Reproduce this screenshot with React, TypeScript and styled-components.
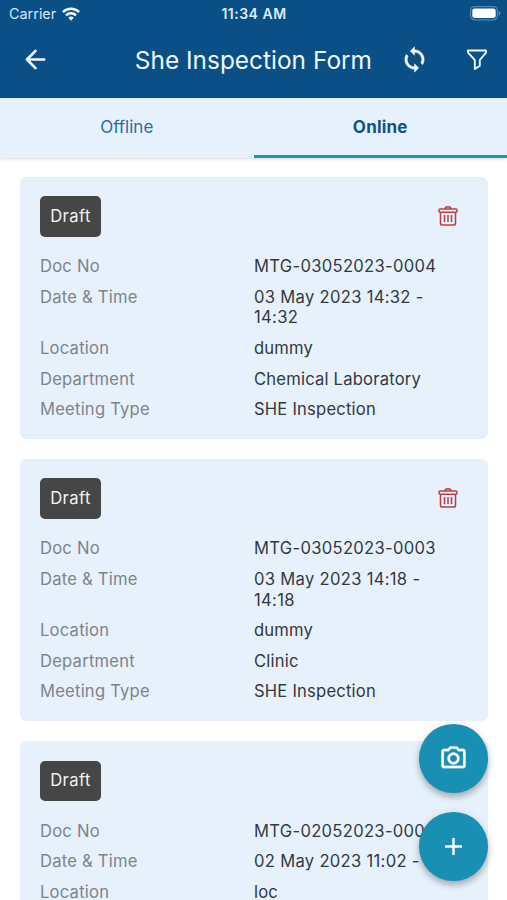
import React from "react";
import styled, { createGlobalStyle } from "styled-components";

const GlobalStyle = createGlobalStyle`
  * { box-sizing: border-box; }
  html, body { margin: 0; height: 100%; overflow: hidden; }
  body { background: #fff; font-family: Inter, "Liberation Sans", sans-serif; }
  button { border: 0; padding: 0; background: none; font: inherit; }
`;

const Screen = styled.main`
  position: relative;
  width: 507px;
  height: 900px;
  overflow: hidden;
  background: #fff;
`;

const Header = styled.header`
  height: 98px;
  background: #0a4f86;
  color: #f0f8ff;
`;

const StatusBar = styled.div`
  display: grid;
  grid-template-columns: 1fr auto 1fr;
  align-items: center;
  height: 27px;
  padding: 0 6px 0 9px;
  font-size: 14.4px;
`;

const Carrier = styled.div`
  display: flex;
  align-items: center;
  gap: 6px;
  color: #d3e6f6;
`;

const Clock = styled.div`
  position: relative;
  left: -1px;
  font-size: 14px;
  font-weight: 600;
  letter-spacing: 0.5px;
  color: #dcebf8;
`;

const BatteryIcon = styled.svg`
  justify-self: end;
`;

const TitleBar = styled.div`
  display: grid;
  grid-template-columns: 70px 1fr 63px 61px;
  align-items: center;
  height: 65px;
`;

const Title = styled.h1`
  margin: 0;
  padding-right: 11px;
  text-align: right;
  font-size: 24.4px;
  font-weight: 400;
  letter-spacing: 0.02px;
  white-space: nowrap;
`;

const IconButton = styled.button`
  display: grid;
  place-items: center;
  height: 40px;
  color: inherit;
`;

const Tabs = styled.nav`
  display: grid;
  grid-template-columns: 1fr 1fr;
  height: 60px;
  background: #e6f1fc;
  box-shadow: 0 1px 3px rgba(60, 30, 30, 0.18);
`;

const Tab = styled.button<{ $active?: boolean }>`
  padding-top: 1px;
  border-bottom: 3px solid ${(p) => (p.$active ? "#2292b5" : "transparent")};
  color: ${(p) => (p.$active ? "#11518a" : "#2d6ba0")};
  font-size: 17px;
  font-weight: ${(p) => (p.$active ? 700 : 400)};
  letter-spacing: ${(p) => (p.$active ? 0.2 : 0)}px;
`;

const List = styled.section`
  display: flex;
  flex-direction: column;
  gap: 20px;
  padding: 19px 19.5px 0 20.4px;
`;

const Card = styled.article`
  height: 262.2px;
  flex: none;
  padding: 19.3px 20px 19.3px 19.6px;
  border-radius: 6px;
  background: #e6f1fc;
`;

const CardTop = styled.div`
  display: flex;
  align-items: center;
  justify-content: space-between;
  padding-right: 10px;
  margin-bottom: 19.5px;
`;

const DeleteButton = styled(IconButton)`
  padding-bottom: 2px;
`;

const Badge = styled.span`
  display: grid;
  place-items: center;
  width: 61px;
  height: 40.5px;
  padding-bottom: 2px;
  border-radius: 5px;
  background: #464646;
  color: #f2f2f2;
  font-size: 16.6px;
  letter-spacing: 0.4px;
`;

const Details = styled.dl`
  display: grid;
  grid-template-columns: 214px 1fr;
  row-gap: 10px;
  margin: 0;
  font-size: 16.6px;
  line-height: 20.6px;
  letter-spacing: 0.22px;
`;

const Label = styled.dt`
  color: #7f8488;
`;

const Value = styled.dd<{ $numeric?: boolean }>`
  margin: 0;
  padding-right: 18px;
  color: #35393e;
  letter-spacing: ${(p) => (p.$numeric ? 0.3 : 0.2)}px;
`;

const Actions = styled.aside`
  position: absolute;
  right: 19.5px;
  bottom: 19.5px;
  display: grid;
  gap: 19.5px;
`;

const Fab = styled.button`
  display: grid;
  place-items: center;
  width: 68.5px;
  height: 68.5px;
  border-radius: 50%;
  background: #188fb3;
  color: #fff;
  box-shadow: 0 4px 6px rgba(0, 0, 0, 0.25), 0 1px 10px rgba(0, 0, 0, 0.08);
`;

const WifiIcon = () => (
  <svg width="18" height="14" viewBox="0 0 18 14" fill="none" stroke="#f5fbff" strokeWidth="2.5">
    <path d="M.9 5.1a11.5 11.5 0 0 1 16.2 0M4 8.4a7.1 7.1 0 0 1 10 0" />
    <path d="M6.3 10.8a3.8 3.8 0 0 1 5.4 0L9 13.7z" fill="#f5fbff" stroke="none" />
  </svg>
);

const Battery = () => (
  <BatteryIcon width="31" height="15" viewBox="0 0 31 15">
    <rect x=".6" y=".6" width="26.8" height="13.3" rx="4" fill="none" stroke="#5685ae" strokeWidth="1.2" />
    <rect x="2.3" y="2.4" width="23.4" height="9.7" rx="2.3" fill="#fff" />
    <path d="M28.8 5v4.6q1.500-.7 1.500-2.300T28.800 5" fill="#7198bb" />
  </BatteryIcon>
);

const BackIcon = () => (
  <svg width="29" height="29" viewBox="0 0 24 24" fill="none" stroke="currentColor" strokeWidth="2.200" strokeLinecap="round" strokeLinejoin="round">
    <path d="M19.200 12H5M12 4.900L4.900 12l7.100 7.100" />
  </svg>
);

const SyncIcon = () => (
  <svg width="29" height="29" viewBox="0 0 24 24" fill="currentColor" stroke="currentColor" strokeWidth=".4" strokeLinejoin="round">
    <path d="M12 4V1.500L8.500 5l3.500 3.500V6c3.310 0 6 2.690 6 6 0 1.010-.25 1.970-.7 2.800l1.460 1.460C19.540 15.030 20 13.570 20 12c0-4.420-3.580-8-8-8zm0 14c-3.310 0-6-2.690-6-6 0-1.010.25-1.970.7-2.800L5.240 7.740C4.460 8.970 4 10.430 4 12c0 4.420 3.580 8 8 8v2.500l3.500-3.500-3.500-3.500V18z" />
  </svg>
);

const FilterIcon = () => (
  <svg width="22" height="22" viewBox="0 0 22 22" fill="none" stroke="currentColor" strokeWidth="1.900" strokeLinejoin="round">
    <path d="M2 1.500h18v2.100l-6.200 7.400v5.700L8.800 20v-9L2 3.600z" />
  </svg>
);

const TrashIcon = () => (
  <svg width="20" height="20" viewBox="0 0 20 20" fill="none" stroke="#bb3f44" strokeWidth="1.500" strokeLinejoin="round">
    <path d="M7 3c0-3 6-3 6 0M2.200 3h15.600q1.200 0 1.200 1.200v1.100q0 1-1 1H2q-1 0-1-1V4.200q0-1.200 1.200-1.200z" />
    <path d="M2.500 6.500v10.700q0 1.800 1.800 1.800h11.400q1.800 0 1.800-1.800V6.500M6.500 9v7M10 9v7M13.500 9v7" />
  </svg>
);

const CameraIcon = () => (
  <svg width="29" height="29" viewBox="0 0 24 24" fill="currentColor" stroke="currentColor" strokeWidth=".2">
    <path d="M14.120 4l1.830 2H20v12H4V6h4.050l1.830-2h4.240M15 2H9L7.170 4H4c-1.100 0-2 .9-2 2v12c0 1.100.9 2 2 2h16c1.100 0 2-.9 2-2V6c0-1.100-.9-2-2-2h-3.170L15 2zm-3 7c1.650 0 3 1.350 3 3s-1.350 3-3 3-3-1.350-3-3 1.350-3 3-3m0-2c-2.760 0-5 2.240-5 5s2.240 5 5 5 5-2.240 5-5-2.240-5-5-5z" />
  </svg>
);

const PlusIcon = () => (
  <svg width="29" height="29" viewBox="0 0 24 24" fill="currentColor">
    <path d="M19 13h-6v6h-2v-6H5v-2h6V5h2v6h6v2z" />
  </svg>
);

const meetings = [
  { doc: "MTG-03052023-0004", time: "03 May 2023 14:32 - 14:32", location: "dummy", department: "Chemical Laboratory" },
  { doc: "MTG-03052023-0003", time: "03 May 2023 14:18 - 14:18", location: "dummy", department: "Clinic" },
  { doc: "MTG-02052023-0002", time: "02 May 2023 11:02 -", location: "loc" },
];

export default function App() {
  return (
    <Screen>
      <GlobalStyle />
      <Header>
        <StatusBar>
          <Carrier>Carrier <WifiIcon /></Carrier>
          <Clock>11:34 AM</Clock>
          <Battery />
        </StatusBar>
        <TitleBar>
          <IconButton aria-label="Back"><BackIcon /></IconButton>
          <Title>She Inspection Form</Title>
          <IconButton aria-label="Sync"><SyncIcon /></IconButton>
          <IconButton aria-label="Filter"><FilterIcon /></IconButton>
        </TitleBar>
      </Header>
      <Tabs>
        <Tab>Offline</Tab>
        <Tab $active>Online</Tab>
      </Tabs>
      <List>
        {meetings.map((m) => (
          <Card key={m.doc}>
            <CardTop>
              <Badge>Draft</Badge>
              <DeleteButton aria-label="Delete"><TrashIcon /></DeleteButton>
            </CardTop>
            <Details>
              <Label>Doc No</Label><Value $numeric>{m.doc}</Value>
              <Label>Date &amp; Time</Label><Value $numeric>{m.time}</Value>
              <Label>Location</Label><Value>{m.location}</Value>
              {m.department && (
                <>
                  <Label>Department</Label><Value>{m.department}</Value>
                  <Label>Meeting Type</Label><Value>SHE Inspection</Value>
                </>
              )}
            </Details>
          </Card>
        ))}
      </List>
      <Actions>
        <Fab aria-label="Take photo"><CameraIcon /></Fab>
        <Fab aria-label="Add"><PlusIcon /></Fab>
      </Actions>
    </Screen>
  );
}
